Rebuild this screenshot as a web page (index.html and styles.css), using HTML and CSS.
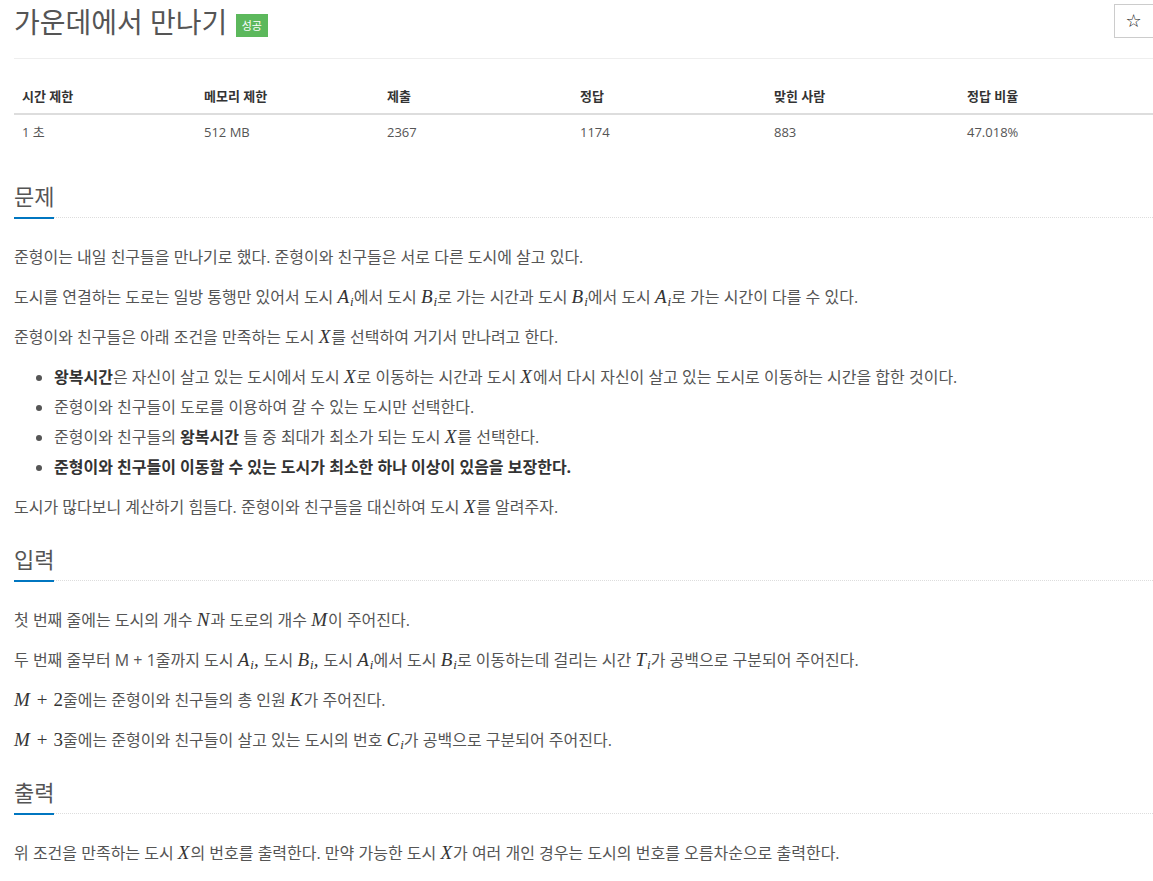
FILE: index.html
```html
<!DOCTYPE html>
<html lang="ko">
<head>
  <meta charset="UTF-8" />
  <meta name="viewport" content="width=device-width, initial-scale=1.0"/>
  <title>가운데에서 만나기</title>
  <link rel="stylesheet" href="styles.css">
</head>
<body>

<div class="page">
  <div class="page-header">
    <h1>가운데에서 만나기 <span class="label-success">성공</span></h1>
    <button class="star-btn">☆</button>
  </div>

  <table class="info-table">
    <thead>
      <tr>
        <th>시간 제한</th>
        <th>메모리 제한</th>
        <th>제출</th>
        <th>정답</th>
        <th>맞힌 사람</th>
        <th>정답 비율</th>
      </tr>
    </thead>
    <tbody>
      <tr>
        <td>1 초</td>
        <td>512 MB</td>
        <td>2367</td>
        <td>1174</td>
        <td>883</td>
        <td>47.018%</td>
      </tr>
    </tbody>
  </table>

  <section class="problem-section">
    <div class="headline"><h2>문제</h2></div>
    <div class="problem-text">
      <p>준형이는 내일 친구들을 만나기로 했다. 준형이와 친구들은 서로 다른 도시에 살고 있다.</p>
      <p>도시를 연결하는 도로는 일방 통행만 있어서 도시 <span class="math"><i>A</i><sub>i</sub></span>에서 도시 <span class="math"><i>B</i><sub>i</sub></span>로 가는 시간과 도시 <span class="math"><i>B</i><sub>i</sub></span>에서 도시 <span class="math"><i>A</i><sub>i</sub></span>로 가는 시간이 다를 수 있다.</p>
      <p>준형이와 친구들은 아래 조건을 만족하는 도시 <span class="math"><i>X</i></span>를 선택하여 거기서 만나려고 한다.</p>
      <ul>
        <li><b>왕복시간</b>은 자신이 살고 있는 도시에서 도시 <span class="math"><i>X</i></span>로 이동하는 시간과 도시 <span class="math"><i>X</i></span>에서 다시 자신이 살고 있는 도시로 이동하는 시간을 합한 것이다.</li>
        <li>준형이와 친구들이 도로를 이용하여 갈 수 있는 도시만 선택한다.</li>
        <li>준형이와 친구들의 <b>왕복시간</b> 들 중 최대가 최소가 되는 도시 <span class="math"><i>X</i></span>를 선택한다.</li>
        <li><b>준형이와 친구들이 이동할 수 있는 도시가 최소한 하나 이상이 있음을 보장한다.</b></li>
      </ul>
      <p>도시가 많다보니 계산하기 힘들다. 준형이와 친구들을 대신하여 도시 <span class="math"><i>X</i></span>를 알려주자.</p>
    </div>
  </section>

  <section class="problem-section">
    <div class="headline"><h2>입력</h2></div>
    <div class="problem-text">
      <p>첫 번째 줄에는 도시의 개수 <span class="math"><i>N</i></span>과 도로의 개수 <span class="math"><i>M</i></span>이 주어진다.</p>
      <p>두 번째 줄부터 M + 1줄까지 도시 <span class="math"><i>A</i><sub>i</sub><i>,</i></span> 도시 <span class="math"><i>B</i><sub>i</sub><i>,</i></span> 도시 <span class="math"><i>A</i><sub>i</sub></span>에서 도시 <span class="math"><i>B</i><sub>i</sub></span>로 이동하는데 걸리는 시간 <span class="math"><i>T</i><sub>i</sub></span>가 공백으로 구분되어 주어진다.</p>
      <p><span class="math"><i>M</i><span class="op">+</span>2</span>줄에는 준형이와 친구들의 총 인원 <span class="math"><i>K</i></span>가 주어진다.</p>
      <p><span class="math"><i>M</i><span class="op">+</span>3</span>줄에는 준형이와 친구들이 살고 있는 도시의 번호 <span class="math"><i>C</i><sub>i</sub></span>가 공백으로 구분되어 주어진다.</p>
    </div>
  </section>

  <section class="problem-section">
    <div class="headline"><h2>출력</h2></div>
    <div class="problem-text">
      <p>위 조건을 만족하는 도시 <span class="math"><i>X</i></span>의 번호를 출력한다. 만약 가능한 도시 <span class="math"><i>X</i></span>가 여러 개인 경우는 도시의 번호를 오름차순으로 출력한다.</p>
    </div>
  </section>
</div>

</body>
</html>
```

FILE: styles.css
```css
html, body {
  overflow-x: hidden;
}
body {
  margin: 0;
  font-family: 'Open Sans', 'Noto Sans CJK KR', sans-serif;
  font-size: 14px;
  color: #555;
  background: #fff;
}
.page {
  margin: 0 -2px 0 14px;
}
.page-header {
  display: flex;
  justify-content: space-between;
  align-items: flex-start;
  padding-bottom: 14px;
  border-bottom: 1px solid #eee;
  margin-bottom: 20px;
}
.page-header h1 {
  margin: 0;
  font-size: 28px;
  font-weight: 400;
  line-height: 44px;
  color: #555;
}
.label-success {
  display: inline-block;
  background-color: #5cb85c;
  color: #fff;
  font-size: 11px;
  line-height: 23px;
  padding: 0 6px;
  margin-left: 1px;
  vertical-align: 3px;
}
.star-btn {
  margin-top: 4px;
  width: 41px;
  height: 34px;
  background: #fff;
  border: 1px solid #ccc;
  font-family: 'DejaVu Sans', sans-serif;
  font-size: 18px;
  color: #111;
  padding: 0 2px 2px 0;
}
.info-table {
  width: 100%;
  border-collapse: collapse;
  table-layout: fixed;
  font-size: 13px;
  margin-bottom: 20px;
}
.info-table th, .info-table td {
  padding: 8px;
  line-height: 18px;
  text-align: left;
}
.info-table th {
  color: #333;
  font-weight: 700;
  border-bottom: 2px solid #ddd;
}
.info-table th:nth-child(1) { width: 166px; }
.info-table th:nth-child(2) { width: 167px; }
.info-table th:nth-child(3) { width: 177px; }
.info-table th:nth-child(4) { width: 178px; }
.info-table th:nth-child(5) { width: 177px; }
.problem-section {
  padding-top: 12px;
}
.headline {
  display: flex;
  border-bottom: 1px dotted #ddd;
  margin-bottom: 24px;
}
.headline h2 {
  margin: 0 0 -2px 0;
  font-size: 22px;
  font-weight: 400;
  line-height: 30px;
  padding-bottom: 6px;
  border-bottom: 2px solid #0076c0;
  color: #555;
}
.problem-text {
  font-size: 16px;
  line-height: 30px;
}
.problem-text p {
  margin: 0 0 10px 0;
}
.problem-text ul {
  margin: 0 0 10px 0;
  padding-left: 40px;
}
.problem-text b {
  color: #333;
}
.math {
  font-family: 'Liberation Serif', serif;
  font-size: 19px;
  line-height: 1;
  color: #333;
}
.math i {
  padding-right: 1px;
}
.math sub {
  font-style: italic;
  font-size: 13px;
  vertical-align: -3px;
  line-height: 1;
}
.math .op {
  margin: 0 6px;
}
```
